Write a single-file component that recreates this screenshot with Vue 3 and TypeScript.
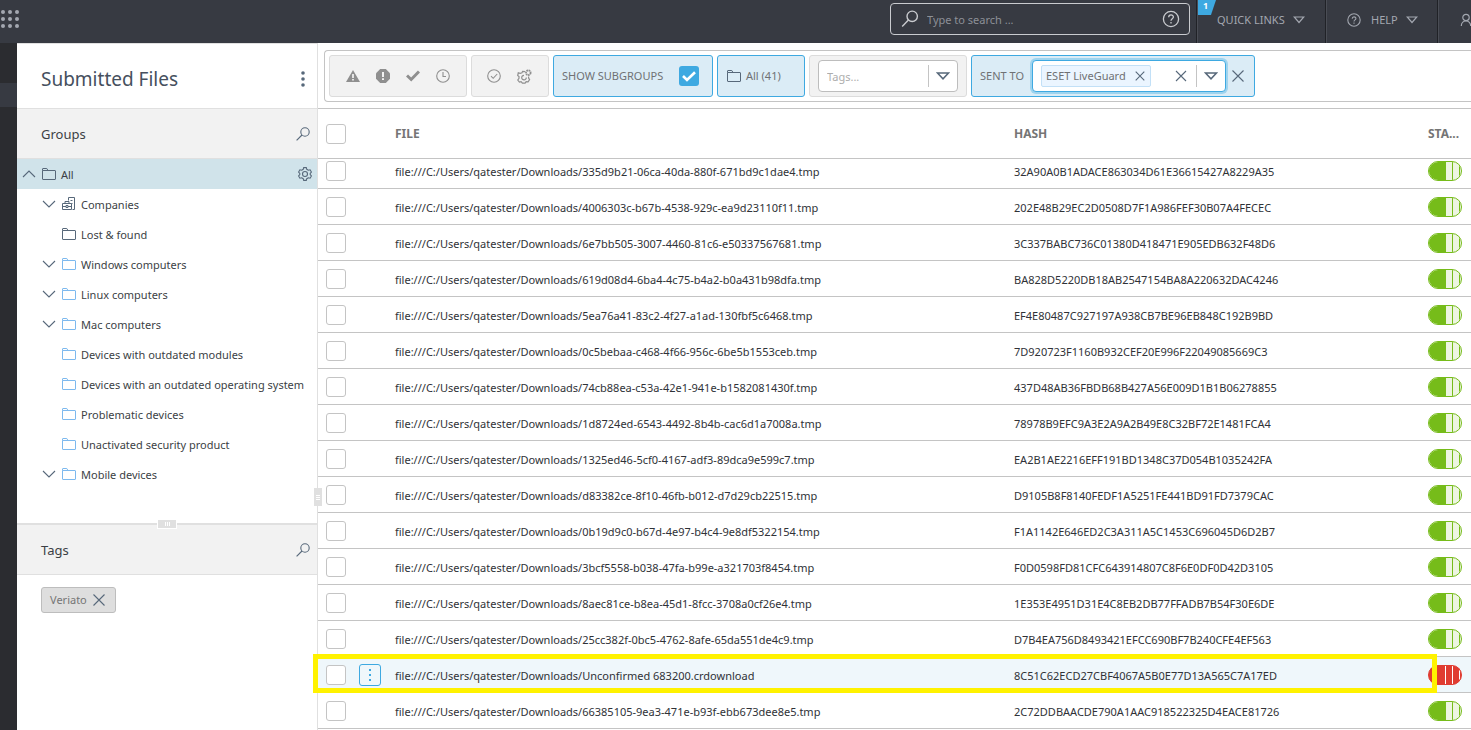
<script setup lang="ts">
import { onMounted, ref } from 'vue'

interface TreeNode {
  label: string
  icon: 'company' | 'static' | 'dynamic'
  expandable: boolean
}

interface FileRow {
  name: string
  hash: string
  danger?: boolean
}

const nodes: TreeNode[] = [
  { label: 'Companies', icon: 'company', expandable: true },
  { label: 'Lost & found', icon: 'static', expandable: false },
  { label: 'Windows computers', icon: 'dynamic', expandable: true },
  { label: 'Linux computers', icon: 'dynamic', expandable: true },
  { label: 'Mac computers', icon: 'dynamic', expandable: true },
  { label: 'Devices with outdated modules', icon: 'dynamic', expandable: false },
  { label: 'Devices with an outdated operating system', icon: 'dynamic', expandable: false },
  { label: 'Problematic devices', icon: 'dynamic', expandable: false },
  { label: 'Unactivated security product', icon: 'dynamic', expandable: false },
  { label: 'Mobile devices', icon: 'dynamic', expandable: true },
]

const folder = 'file:///C:/Users/qatester/Downloads/'

const rows: FileRow[] = [
  { name: '335d9b21-06ca-40da-880f-671bd9c1dae4.tmp', hash: '32A90A0B1ADACE863034D61E36615427A8229A35' },
  { name: '4006303c-b67b-4538-929c-ea9d23110f11.tmp', hash: '202E48B29EC2D0508D7F1A986FEF30B07A4FECEC' },
  { name: '6e7bb505-3007-4460-81c6-e50337567681.tmp', hash: '3C337BABC736C01380D418471E905EDB632F48D6' },
  { name: '619d08d4-6ba4-4c75-b4a2-b0a431b98dfa.tmp', hash: 'BA828D5220DB18AB2547154BA8A220632DAC4246' },
  { name: '5ea76a41-83c2-4f27-a1ad-130fbf5c6468.tmp', hash: 'EF4E80487C927197A938CB7BE96EB848C192B9BD' },
  { name: '0c5bebaa-c468-4f66-956c-6be5b1553ceb.tmp', hash: '7D920723F1160B932CEF20E996F22049085669C3' },
  { name: '74cb88ea-c53a-42e1-941e-b1582081430f.tmp', hash: '437D48AB36FBDB68B427A56E009D1B1B06278855' },
  { name: '1d8724ed-6543-4492-8b4b-cac6d1a7008a.tmp', hash: '78978B9EFC9A3E2A9A2B49E8C32BF72E1481FCA4' },
  { name: '1325ed46-5cf0-4167-adf3-89dca9e599c7.tmp', hash: 'EA2B1AE2216EFF191BD1348C37D054B1035242FA' },
  { name: 'd83382ce-8f10-46fb-b012-d7d29cb22515.tmp', hash: 'D9105B8F8140FEDF1A5251FE441BD91FD7379CAC' },
  { name: '0b19d9c0-b67d-4e97-b4c4-9e8df5322154.tmp', hash: 'F1A1142E646ED2C3A311A5C1453C696045D6D2B7' },
  { name: '3bcf5558-b038-47fa-b99e-a321703f8454.tmp', hash: 'F0D0598FD81CFC643914807C8F6E0DF0D42D3105' },
  { name: '8aec81ce-b8ea-45d1-8fcc-3708a0cf26e4.tmp', hash: '1E353E4951D31E4C8EB2DB77FFADB7B54F30E6DE' },
  { name: '25cc382f-0bc5-4762-8afe-65da551de4c9.tmp', hash: 'D7B4EA756D8493421EFCC690BF7B240CFE4EF563' },
  { name: 'Unconfirmed 683200.crdownload', hash: '8C51C62ECD27CBF4067A5B0E77D13A565C7A17ED', danger: true },
  { name: '66385105-9ea3-471e-b93f-ebb673dee8e5.tmp', hash: '2C72DDBAACDE790A1AAC918522325D4EACE81726' },
]

const showSubgroups = ref(true)
const scroller = ref<HTMLElement | null>(null)

onMounted(() => {
  if (scroller.value) scroller.value.scrollTop = 6
})
</script>

<template>
  <div class="page">
    <header class="topbar">
      <button class="plain apps" aria-label="Apps">
        <svg width="20" height="20" viewBox="0 0 20 20" fill="#a3a7b0">
          <template v-for="y in 3" :key="y">
            <circle v-for="x in 3" :key="x" :cx="x * 7 - 4" :cy="y * 7 - 4" r="2" />
          </template>
        </svg>
      </button>
      <label class="search">
        <svg width="18" height="18" viewBox="0 0 18 18" fill="none" stroke="#c9cbcf" stroke-width="1.4">
          <circle cx="11.2" cy="6.3" r="5.2" /><path d="M7.4 10 1.2 16.4" />
        </svg>
        <input type="text" placeholder="Type to search ..." aria-label="Search" />
        <svg width="18" height="18" viewBox="0 0 18 18" fill="none" stroke="#c9cbcf" stroke-width="1.3">
          <circle cx="9" cy="9" r="7.6" /><path d="M6.7 7.2c0-3 4.7-3 4.7-.2C11.4 8.7 9 8.7 9 10.7M9 12v1.4" />
        </svg>
      </label>
      <nav class="topnav">
        <button class="plain navitem quick">
          <span class="badge">1</span>
          QUICK LINKS
          <svg width="12" height="8" viewBox="0 0 12 8" fill="none" stroke="#a3a7b0" stroke-width="1.2"><path d="M1.2 1h9.600L6 6.500z" /></svg>
        </button>
        <button class="plain navitem help">
          <svg class="q" width="14" height="14" viewBox="0 0 14 14" fill="none" stroke="#a3a7b0" stroke-width="1.1">
            <circle cx="7" cy="7" r="6.2" /><path d="M5.200 5.700c0-2.400 3.700-2.400 3.700-.2C8.900 6.900 7 6.900 7 8.400M7 9.600v1.100" />
          </svg>
          HELP
          <svg width="12" height="8" viewBox="0 0 12 8" fill="none" stroke="#a3a7b0" stroke-width="1.2"><path d="M1.200 1h9.600L6 6.500z" /></svg>
        </button>
        <button class="plain navitem user" aria-label="User">
          <svg width="14" height="14" viewBox="0 0 14 14" fill="none" stroke="#a3a7b0" stroke-width="1.2">
            <circle cx="7" cy="4.5" r="3.2" /><path d="M2.300 13c0-3 2-5.100 4.700-5.100s4.700 2.100 4.700 5.100" />
          </svg>
        </button>
      </nav>
    </header>

    <div class="body">
      <div class="rail"><div class="rail-active"></div></div>

      <aside class="sidebar">
        <div class="title-row">
          <h1>Submitted Files</h1>
          <button class="plain" aria-label="More">
            <svg width="6" height="18" viewBox="0 0 6 18" fill="#57687a"><circle cx="3" cy="3" r="1.8" /><circle cx="3" cy="9" r="1.8" /><circle cx="3" cy="15" r="1.8" /></svg>
          </button>
        </div>
        <div class="section-head">
          <h2>Groups</h2>
          <button class="plain" aria-label="Search groups">
            <svg width="14" height="14" viewBox="0 0 14 14" fill="none" stroke="#57687a" stroke-width="1.1"><circle cx="9" cy="5" r="4.2" /><path d="M6 8 .6 13.400" /></svg>
          </button>
        </div>
        <ul class="tree">
          <li class="node root">
            <svg class="chev" width="14" height="8" viewBox="0 0 14 8" fill="none" stroke="#57687a" stroke-width="1.1"><path d="M1 7 7 1l6 6" /></svg>
            <svg width="14" height="12" viewBox="0 0 14 12" fill="none" stroke="#57687a"><path d="M.5 2.500V11q0 .5.5.5h12q.5 0 .5-.5V3q0-.5-.5-.5H6L4.800.5H1Q.5.500.5 1z M.5 2.500H6" /></svg>
            <span class="label grow">All</span>
            <button class="plain" aria-label="Group settings">
              <svg width="14" height="14" viewBox="0 0 14 14" fill="none" stroke="#57687a" stroke-width="1.1">
                <path d="M5.700.6h2.600l.5 1.700 1.500.9 1.800-.4 1.300 2.300L12.200 6.400v1.200l1.200 1.300-1.300 2.300-1.800-.4-1.500.9-.5 1.700H5.700l-.5-1.700-1.500-.9-1.800.4L.6 8.900l1.200-1.300V6.400L.6 5.100l1.300-2.300 1.800.4 1.500-.9z" />
                <circle cx="7" cy="7" r="2.5" />
              </svg>
            </button>
          </li>
          <li v-for="n in nodes" :key="n.label" class="node">
            <span class="slot">
              <svg v-if="n.expandable" width="14" height="8" viewBox="0 0 14 8" fill="none" stroke="#57687a" stroke-width="1.1"><path d="M1 1l6 6 6-6" /></svg>
            </span>
            <svg v-if="n.icon === 'company'" width="14" height="14" viewBox="0 0 14 14" fill="none" stroke="#57687a">
              <path d="M6.500 3.500v-3h6v12h-2M8.500 3.500h2M9.500 6.500h1M.5 6.500h9v6h-9zM3 6.500v-2h4v2M.5 9.500H4M6 9.500h3.500M4 8.500h2v2H4z" />
            </svg>
            <svg v-else :class="n.icon" width="14" height="12" viewBox="0 0 14 12" fill="none"><path d="M.5 2.500V11q0 .5.5.5h12q.5 0 .5-.5V3q0-.5-.5-.5H6L4.800.5H1Q.5.500.5 1z M.5 2.500H6" /></svg>
            <span class="label">{{ n.label }}</span>
          </li>
        </ul>
        <div class="splitter"><span class="grip"><i></i><i></i><i></i></span></div>
        <div class="section-head">
          <h2>Tags</h2>
          <button class="plain" aria-label="Search tags">
            <svg width="14" height="14" viewBox="0 0 14 14" fill="none" stroke="#57687a" stroke-width="1.1"><circle cx="9" cy="5" r="4.2" /><path d="M6 8 .6 13.400" /></svg>
          </button>
        </div>
        <div class="tags">
          <button class="tag">
            Veriato
            <svg width="12" height="12" viewBox="0 0 12 12" stroke="#57687a" stroke-width="1.1"><path d="M.5.500l11 11M11.500.5l-11 11" /></svg>
          </button>
        </div>
        <div class="side-grip"><i></i><i></i><i></i></div>
      </aside>

      <main class="main">
        <div class="filters-wrap">
          <div class="filters">
            <div class="box states">
              <button class="plain" aria-label="Warning">
                <svg width="14" height="12" viewBox="0 0 14 12"><path d="M7 0 14 12H0z" fill="#8f8f8f" /><path d="M7 4v4M7 9v1.500" stroke="#f2f2f2" stroke-width="1.7" /></svg>
              </button>
              <button class="plain" aria-label="Error">
                <svg width="14" height="14" viewBox="0 0 14 14"><path d="M4.200 0h5.600L14 4.200v5.600L9.800 14H4.200L0 9.800V4.200z" fill="#8f8f8f" /><path d="M7 3v5M7 9.200V11" stroke="#f2f2f2" stroke-width="2" /></svg>
              </button>
              <button class="plain" aria-label="OK">
                <svg width="14" height="12" viewBox="0 0 14 12" fill="none" stroke="#8f8f8f" stroke-width="3"><path d="M1 5.500l4.200 4L13 1.500" /></svg>
              </button>
              <button class="plain" aria-label="Pending">
                <svg width="14" height="14" viewBox="0 0 14 14" fill="none" stroke="#8f8f8f" stroke-width="1.1"><circle cx="7" cy="7" r="6.3" /><path d="M7 3v4.500h3" /></svg>
              </button>
            </div>
            <div class="box modes">
              <button class="plain" aria-label="Verified">
                <svg width="14" height="14" viewBox="0 0 14 14" fill="none" stroke="#8f8f8f" stroke-width="1.1"><circle cx="7" cy="7" r="6.3" /><path d="M4 7.200 6.200 9.300 10.200 5" /></svg>
              </button>
              <button class="plain" aria-label="Automation">
                <svg width="15" height="15" viewBox="0 0 15 15" fill="none" stroke="#8f8f8f" stroke-width="1.2">
                  <path d="M8 2.700 5.600 2.300 5 3.800 3.200 4.300 1.300 3.800.7 6.500 2 7.500v1.800L.8 11l1.600 2 1.700-.4 1.300 1.600h2.700l1-1.600 2 .3 1.500-2.300-1-1.600V7.500" />
                  <circle cx="11.3" cy="3.7" r="2.3" stroke-width="1.8" stroke-dasharray="1.5 .5" />
                  <path d="M7 6.300A2.300 2.300 0 1 0 9.300 8.500" />
                </svg>
              </button>
            </div>
            <label class="box on subgroups">
              SHOW SUBGROUPS
              <input v-model="showSubgroups" type="checkbox" />
              <span class="tick">
                <svg v-if="showSubgroups" width="14" height="11" viewBox="0 0 14 11" fill="none" stroke="#fff" stroke-width="2.6"><path d="M1 5l4 4L13 1.200" /></svg>
              </span>
            </label>
            <button class="box on all">
              <svg width="14" height="12" viewBox="0 0 14 12" fill="none" stroke="#57687a"><path d="M.5 2.500V11q0 .5.5.5h12q.5 0 .5-.5V3q0-.5-.5-.5H6L4.800.5H1Q.5.500.5 1z M.5 2.500H6" /></svg>
              All (41)
            </button>
            <div class="box tagbox">
              <div class="combo">
                <input type="text" placeholder="Tags..." aria-label="Tags" />
                <button class="plain drop" aria-label="Open tags">
                  <svg width="14" height="8" viewBox="0 0 14 8" fill="none" stroke="#57687a" stroke-width="1.5"><path d="M1.500 1h11L7 6.800z" /></svg>
                </button>
              </div>
            </div>
            <div class="box on sent">
              <span>SENT TO</span>
              <div class="combo focus">
                <span class="chip">
                  ESET LiveGuard
                  <button class="plain" aria-label="Remove ESET LiveGuard">
                    <svg width="10" height="10" viewBox="0 0 10 10" stroke="#57687a" stroke-width="1.1"><path d="M.7.700l8.600 8.600M9.300.7.700 9.300" /></svg>
                  </button>
                </span>
                <button class="plain clear" aria-label="Clear">
                  <svg width="12" height="12" viewBox="0 0 12 12" stroke="#57687a" stroke-width="1.1"><path d="M1 1l10 10M11 1 1 11" /></svg>
                </button>
                <button class="plain drop" aria-label="Open list">
                  <svg width="14" height="8" viewBox="0 0 14 8" fill="none" stroke="#57687a" stroke-width="1.5"><path d="M1.500 1h11L7 6.800z" /></svg>
                </button>
              </div>
              <button class="plain" aria-label="Remove filter">
                <svg width="12" height="12" viewBox="0 0 12 12" stroke="#57687a" stroke-width="1.1"><path d="M.5.500l11 11M11.500.5l-11 11" /></svg>
              </button>
            </div>
          </div>
        </div>

        <div ref="scroller" class="scroller">
          <table>
            <colgroup><col class="c-check" /><col class="c-menu" /><col /><col class="c-hash" /><col class="c-status" /></colgroup>
            <thead>
              <tr>
                <th class="check"><input type="checkbox" aria-label="Select all" /></th>
                <th></th>
                <th>FILE</th>
                <th>HASH</th>
                <th>STA...</th>
              </tr>
            </thead>
            <tbody>
              <tr v-for="r in rows" :key="r.hash" :class="{ hot: r.danger }">
                <td class="check"><input type="checkbox" :aria-label="'Select ' + r.name" /></td>
                <td>
                  <button v-if="r.danger" class="rowmenu" aria-label="Row menu">
                    <svg width="4" height="12" viewBox="0 0 4 12" fill="#3ea9e1"><path d="M1 0h2v2H1zM1 5h2v2H1zM1 10h2v2H1z" /></svg>
                  </button>
                </td>
                <td class="text">{{ folder }}{{ r.name }}</td>
                <td class="text">{{ r.hash }}</td>
                <td>
                  <span class="pill" :class="{ danger: r.danger }"><i></i><i></i><i></i></span>
                </td>
              </tr>
            </tbody>
          </table>
          <div class="tail"></div>
        </div>
        <div class="marker"></div>
      </main>
    </div>
  </div>
</template>

<style>
body {
  margin: 0;
  overflow: hidden;
}
</style>

<style scoped>
* {
  box-sizing: border-box;
}
.page {
  height: 100vh;
  display: flex;
  flex-direction: column;
  overflow: hidden;
  background: #fff;
  color: #3c3f45;
  font: 11px/18px "Noto Sans", "Open Sans", sans-serif;
}
svg {
  display: block;
  flex: none;
}
button,
input {
  font: inherit;
  color: inherit;
  margin: 0;
}
.plain {
  display: flex;
  align-items: center;
  padding: 0;
  border: 0;
  background: none;
}
.topbar {
  flex: none;
  display: flex;
  height: 43px;
  background: #373a42;
  color: #a3a7b0;
}
.apps {
  height: 38px;
}
.search {
  display: flex;
  align-items: center;
  gap: 8px;
  width: 300px;
  height: 32px;
  margin: 3px 6px 0 auto;
  padding: 0 9px 0 10px;
  border: 1px solid #c9cbcf;
  border-radius: 4px;
}
.search input {
  flex: 1;
  min-width: 0;
  padding: 2px 0 0;
  border: 0;
  background: none;
  outline: none;
}
.search input::placeholder {
  color: #8d9097;
  opacity: 1;
}
.topnav {
  display: flex;
}
.navitem {
  position: relative;
  gap: 8px;
  padding-bottom: 4px;
  border-left: 1px solid #202227;
  box-shadow: inset 1px 0 #4a4d55;
}
.quick {
  width: 129px;
  padding-left: 20px;
}
.help {
  width: 112px;
  padding-left: 21px;
}
.q {
  margin-right: 2px;
}
.user {
  width: 34px;
  padding-left: 21px;
  overflow: hidden;
}
.badge {
  position: absolute;
  left: 1px;
  top: 0;
  width: 18px;
  height: 15px;
  padding-right: 3px;
  background: #3ea9e1;
  clip-path: polygon(0 0, 100% 0, 72% 100%, 0 100%);
  color: #fff;
  font-size: 9px;
  font-weight: 700;
  line-height: 12px;
}
.body {
  flex: 1;
  min-height: 0;
  display: flex;
}
.rail {
  flex: none;
  width: 17px;
  padding-top: 40px;
  background: #2b2c30;
}
.rail-active {
  height: 24px;
  background: #373a42;
}
.sidebar {
  position: relative;
  flex: none;
  display: flex;
  flex-direction: column;
  width: 301px;
  border-right: 1px solid #e0e0e0;
  border-top: 1px solid #e0e0e0;
}
.title-row,
.section-head {
  flex: none;
  display: flex;
  align-items: center;
  justify-content: space-between;
  border-bottom: 1px solid #e0e0e0;
}
.title-row {
  height: 65px;
  padding: 5px 11px 0 24px;
}
h1,
h2 {
  margin: 0;
  font-weight: 400;
}
h1 {
  color: #46505e;
  font-size: 19px;
  line-height: 28px;
}
.section-head {
  height: 50px;
  padding: 1px 7px 0 24px;
  background: #f2f2f2;
}
h2 {
  font-size: 13px;
}
.tree {
  flex: none;
  height: 364px;
  margin: 0;
  padding: 0;
  list-style: none;
}
.node {
  display: flex;
  align-items: center;
  height: 30px;
  gap: 5px;
  padding-left: 25px;
  white-space: nowrap;
}
.root {
  padding: 0 5px;
  background: #d0e3ea;
}
.chev {
  margin-right: 1px;
}
.label {
  padding-top: 2px;
}
.grow {
  flex: 1;
}
.slot {
  flex: none;
  width: 15px;
}
.static {
  stroke: #57687a;
}
.dynamic {
  stroke: #7db9ee;
}
.splitter {
  flex: none;
  display: flex;
  justify-content: center;
  align-items: center;
  height: 2px;
  background: #e0e0e0;
}
.grip {
  position: relative;
  z-index: 1;
  flex: none;
  display: flex;
  align-items: center;
  justify-content: center;
  gap: 1px;
  width: 20px;
  height: 10px;
  border: 1px solid #fff;
  background: #e0e0e0;
}
.grip i {
  width: 1px;
  height: 4px;
  background: #fff;
}
.tags {
  padding: 12px 24px;
}
.tag {
  display: flex;
  align-items: center;
  gap: 6px;
  height: 26px;
  padding: 0 10px 0 8px;
  border: 1px solid #bdbdbd;
  border-radius: 3px;
  background: #dedede;
  color: #757575;
}
.side-grip {
  position: absolute;
  z-index: 2;
  right: -5px;
  top: 444px;
  display: flex;
  flex-direction: column;
  align-items: center;
  justify-content: center;
  gap: 1px;
  width: 8px;
  height: 18px;
  background: #e0e0e0;
}
.side-grip i {
  width: 4px;
  height: 1px;
  background: #fff;
}
.main {
  position: relative;
  flex: 1;
  min-width: 0;
  display: flex;
  flex-direction: column;
}
.filters-wrap {
  flex: none;
  padding: 7px 0 6px 6px;
  border-bottom: 1px solid #c4c4c4;
}
.filters {
  display: flex;
  gap: 4px;
  padding: 4px;
  border: 1px solid #c4c4c4;
  border-right: 0;
  border-radius: 4px 0 0 4px;
  white-space: nowrap;
}
.box {
  flex: none;
  display: flex;
  align-items: center;
  height: 42px;
  border: 1px solid #dcdcdc;
  border-radius: 3px;
  background: #f2f2f2;
  color: #6f7174;
}
.on {
  border-color: #3ea9e1;
  background: #dbecf6;
}
.states {
  width: 138px;
  gap: 16px;
  padding: 0 16px;
}
.modes {
  width: 78px;
  gap: 16px;
  padding: 0 15px;
}
.subgroups {
  position: relative;
  justify-content: space-between;
  width: 160px;
  padding: 0 13px 0 8px;
}
.subgroups input {
  position: absolute;
  opacity: 0;
}
.tick {
  display: flex;
  align-items: center;
  justify-content: center;
  width: 20px;
  height: 20px;
  border-radius: 3px;
  background: #3ea9e1;
}
.all {
  gap: 5px;
  width: 88px;
  padding: 0 9px;
}
.tagbox {
  width: 158px;
  padding: 0 8px;
}
.combo {
  flex: 1;
  display: flex;
  align-items: center;
  min-width: 0;
  height: 32px;
  border: 1px solid #bdbdbd;
  border-radius: 4px;
  background: #fff;
}
.combo input {
  flex: 1;
  min-width: 0;
  padding: 1px 8px 0;
  border: 0;
  outline: none;
  background: none;
}
.combo input::placeholder {
  color: #adadad;
  opacity: 1;
}
.drop {
  width: 29px;
  height: 22px;
  padding-left: 7px;
  border-left: 1px solid #c4c4c4;
}
.sent {
  gap: 6px;
  width: 284px;
  padding: 0 10px 0 8px;
}
.sent > span {
  width: 46px;
}
.focus {
  border-color: #3ea9e1;
  box-shadow: 0 0 0 2px #9fd4ef;
}
.chip {
  display: flex;
  align-items: center;
  justify-content: space-between;
  width: 110px;
  height: 22px;
  margin-left: 8px;
  padding: 0 5px 0 4px;
  border: 1px solid #c2e0f7;
  border-radius: 2px;
  background: #ebf5ff;
}
.clear {
  margin: 0 9px 0 auto;
}
.scroller {
  flex: 1;
  min-height: 0;
  overflow: hidden;
}
.tail {
  height: 36px;
}
table {
  width: 100%;
  table-layout: fixed;
  border-collapse: separate;
  border-spacing: 0;
}
.c-check,
.c-menu {
  width: 36px;
}
.c-hash {
  width: 414px;
}
.c-status {
  width: 48px;
}
th,
td {
  padding: 0 0 0 5px;
  border-bottom: 1px solid #c4c4c4;
  text-align: left;
  white-space: nowrap;
}
th {
  position: sticky;
  z-index: 1;
  top: 0;
  height: 50px;
  background: #fff;
  color: #757575;
  font-size: 12px;
  font-weight: 700;
}
td {
  height: 36px;
  color: #2f3237;
}
td.text {
  padding-top: 2px;
}
th.check,
td.check {
  padding-left: 8px;
}
.check input {
  appearance: none;
  display: block;
  width: 20px;
  height: 20px;
  border: 1px solid #c4c4c4;
  border-radius: 3px;
  background: #fff;
}
.hot td {
  background: #eff7fb;
}
.rowmenu {
  display: flex;
  align-items: center;
  justify-content: center;
  width: 22px;
  height: 22px;
  padding: 0;
  border: 1px solid #3ea9e1;
  border-radius: 3px;
  background: #eff7fb;
}
.pill {
  display: flex;
  width: 34px;
  height: 20px;
  overflow: hidden;
  border: 1px solid #76bc1a;
  border-radius: 10px;
  background: #edf5e1;
}
.pill i {
  flex: none;
  width: 7px;
  border-right: 1px solid #76bc1a;
}
.pill i:first-child {
  width: 17px;
  background: #76bc1a;
}
.pill.danger {
  border-color: #e03c31;
  background: #e03c31;
}
.pill.danger i {
  border-right-color: #fff;
}
.pill.danger i:first-child {
  background: #e03c31;
}
.marker {
  position: absolute;
  z-index: 3;
  left: -5px;
  right: 34px;
  top: 611px;
  height: 39px;
  border: 5px solid #fff200;
  pointer-events: none;
}
</style>
